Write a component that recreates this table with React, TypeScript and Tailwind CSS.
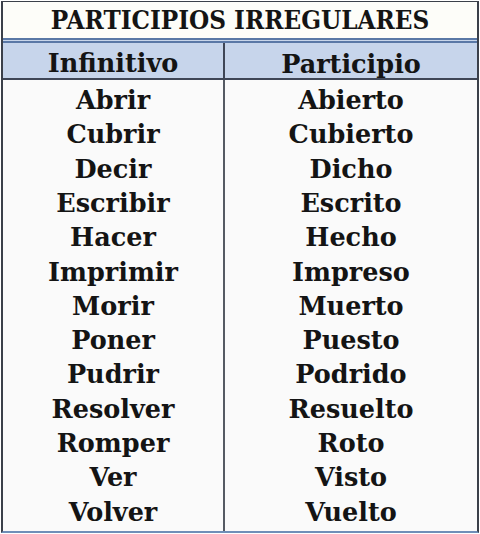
const rows: [string, string][] = [
  ["Abrir", "Abierto"],
  ["Cubrir", "Cubierto"],
  ["Decir", "Dicho"],
  ["Escribir", "Escrito"],
  ["Hacer", "Hecho"],
  ["Imprimir", "Impreso"],
  ["Morir", "Muerto"],
  ["Poner", "Puesto"],
  ["Pudrir", "Podrido"],
  ["Resolver", "Resuelto"],
  ["Romper", "Roto"],
  ["Ver", "Visto"],
  ["Volver", "Vuelto"],
];

const App = () => {
  return (
    <div
      className="w-[480px] h-[534px] bg-white p-px text-[#141414] font-bold"
      style={{ fontFamily: '"DejaVu Serif", "Liberation Serif", serif' }}
    >
      <div className="h-[532px] flex flex-col border-l-2 border-t border-r-2 border-b-2 border-l-[#3b404a] border-t-[#3b404a] border-r-[#3b404a] border-b-[#6f8fb8]">
        <div className="h-[36px] flex items-center justify-center bg-[#fdfdf9] text-[23.2px]">
          <span className="inline-block scale-y-[1.15]">PARTICIPIOS IRREGULARES</span>
        </div>
        <div className="h-[5px] border-t-2 border-b-2 border-[#5a78a6] bg-[#c9d6ea]" />
        <div className="h-[37px] grid grid-cols-[222px_1fr] bg-[#c7d5eb] border-b-2 border-[#3f4656] text-[25.5px] pt-[2px]">
          <div className="flex items-center justify-center border-r-2 border-[#3f4656] -mt-[2px]">Infinitivo</div>
          <div className="flex items-center justify-center">Participio</div>
        </div>
        <div className="flex-1 grid grid-cols-[222px_1fr] bg-[#fafafa] text-[25.5px]">
          <div className="flex flex-col border-r-2 border-[#555a63] pt-[3px]">
            {rows.map(([a]) => (
              <div key={a} className="h-[34.3px] flex items-center justify-center">
                {a}
              </div>
            ))}
          </div>
          <div className="flex flex-col pt-[3px]">
            {rows.map(([, b]) => (
              <div key={b} className="h-[34.3px] flex items-center justify-center">
                {b}
              </div>
            ))}
          </div>
        </div>
      </div>
    </div>
  );
};

export default App;
